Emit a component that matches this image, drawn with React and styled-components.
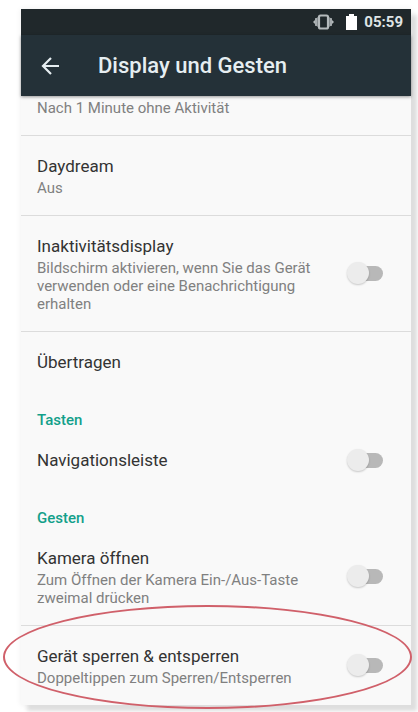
import React, { useState } from "react";
import styled, { createGlobalStyle } from "styled-components";

const GlobalStyle = createGlobalStyle`
  * {
    box-sizing: border-box;
  }

  body {
    margin: 0;
    background-color: #fff;
    font-family: Roboto, "Liberation Sans", sans-serif;
  }
`;

const Page = styled.div`
  padding: 9px 7px 7px 21px;
  overflow: hidden;
`;

const Screen = styled.main`
  background-color: #f9f9f9;
  box-shadow: 6px 6px 4px #dedede, 0 0 6px #eee;
`;

const StatusBar = styled.div`
  display: flex;
  align-items: center;
  justify-content: flex-end;
  height: 26px;
  padding-right: 8px;
  background-color: #20282b;
  color: #dfe4e5;
`;

const Clock = styled.time`
  margin-left: 7px;
  font-size: 15px;
  font-weight: 700;
`;

const BatterySvg = styled.svg`
  margin-left: 12px;
`;

const AppBar = styled.header`
  display: flex;
  align-items: center;
  gap: 36px;
  height: 61px;
  padding: 0 18px;
  background-color: #243138;
  color: #e6eef1;
  position: relative;
  box-shadow: 0 1px 3px rgba(0, 0, 0, 0.4);
`;

const BackButton = styled.button`
  display: flex;
  padding: 0;
  border: none;
  background: none;
  color: inherit;
  cursor: pointer;
`;

const Heading = styled.h1`
  margin: 0;
  font-size: 22px;
  font-weight: 500;
  white-space: nowrap;
`;

const Row = styled.div`
  display: flex;
  align-items: center;
  justify-content: space-between;
  gap: 24px;
  padding: ${(props) => (props.$cut ? "3px" : "17px")} 28px 18px 16px;
  border-bottom: ${(props) => (props.$divider ? "1px solid #dcdcdc" : "none")};
  position: relative;
`;

const Texts = styled.label`
  display: flex;
  flex-direction: column;
`;

const Title = styled.span`
  color: #333;
  font-size: 17px;
  line-height: 26px;
`;

const Summary = styled.span`
  color: #808080;
  font-size: 15px;
  line-height: 18px;
`;

const Category = styled.h2`
  margin: 0;
  padding: 17px 16px 0;
  color: #12a08a;
  font-size: 15px;
  font-weight: 500;
  line-height: 20px;
`;

const Switch = styled.input`
  appearance: none;
  display: grid;
  flex-shrink: 0;
  align-items: center;
  width: 36px;
  height: 22px;
  margin: 0;
  cursor: pointer;

  &::before,
  &::after {
    content: "";
    grid-area: 1 / 1;
  }

  &::before {
    justify-self: end;
    width: 32px;
    height: 15px;
    border-radius: 8px;
    background-color: #b8b8b8;
  }

  &::after {
    width: 22px;
    height: 22px;
    border-radius: 50%;
    background-color: #ececec;
    box-shadow: 0 1px 2px rgba(0, 0, 0, 0.2);
  }

  &:checked::after {
    justify-self: end;
  }
`;

const Marker = styled.div`
  position: absolute;
  top: -21px;
  right: -1px;
  bottom: -4px;
  left: -18px;
  border: 2px solid #d0606a;
  border-radius: 50%;
  pointer-events: none;
`;

function VibrateIcon() {
  return (
    <svg width="21" height="16" viewBox="0 0 21 16" fill="none" stroke="#b4babc">
      <rect x="6" y="1.5" width="9" height="13" rx="1.5" strokeWidth="2.2" />
      <path d="M5 3L2 5v6l3 2zM16 3l3 2v6l-3 2z" fill="#858c8f" stroke="none" />
      <path d="M3 4v8M18 4v8" strokeWidth="1.4" />
      <path d="M0 8l2-2v4zM21 8l-2-2v4z" fill="#b4babc" stroke="none" />
    </svg>
  );
}

function BatteryIcon() {
  return (
    <BatterySvg width="11" height="16" viewBox="0 0 11 16" fill="#fff">
      <path d="M3 0h5v2h3v14H0V2h3z" />
    </BatterySvg>
  );
}

function BackIcon() {
  return (
    <svg width="23" height="20" viewBox="0 0 23 20" fill="none" stroke="currentColor" strokeWidth="2.2">
      <path d="M20 10H4M12 2l-8 8 8 8" />
    </svg>
  );
}

function Setting({ id, title, summary, divider, cut, toggle, marked }) {
  const [on, setOn] = useState(false);

  return (
    <Row $divider={divider} $cut={cut}>
      <Texts as={toggle ? "label" : "div"} htmlFor={toggle ? id : undefined}>
        {title && <Title>{title}</Title>}
        {summary && <Summary>{summary}</Summary>}
      </Texts>
      {toggle && (
        <Switch
          id={id}
          type="checkbox"
          checked={on}
          onChange={(e) => setOn(e.target.checked)}
        />
      )}
      {marked && <Marker />}
    </Row>
  );
}

export default function App() {
  return (
    <Page>
      <GlobalStyle />
      <Screen>
        <StatusBar>
          <VibrateIcon />
          <BatteryIcon />
          <Clock>05:59</Clock>
        </StatusBar>
        <AppBar>
          <BackButton aria-label="Zurück">
            <BackIcon />
          </BackButton>
          <Heading>Display und Gesten</Heading>
        </AppBar>
        <Setting cut divider summary="Nach 1 Minute ohne Aktivität" />
        <Setting divider title="Daydream" summary="Aus" />
        <Setting
          id="ambient"
          toggle
          divider
          title="Inaktivitätsdisplay"
          summary="Bildschirm aktivieren, wenn Sie das Gerät verwenden oder eine Benachrichtigung erhalten"
        />
        <Setting title="Übertragen" />
        <Category>Tasten</Category>
        <Setting id="navbar" toggle title="Navigationsleiste" />
        <Category>Gesten</Category>
        <Setting
          id="camera"
          toggle
          divider
          title="Kamera öffnen"
          summary="Zum Öffnen der Kamera Ein-/Aus-Taste zweimal drücken"
        />
        <Setting
          id="lock"
          toggle
          marked
          title="Gerät sperren & entsperren"
          summary="Doppeltippen zum Sperren/Entsperren"
        />
      </Screen>
    </Page>
  );
}
